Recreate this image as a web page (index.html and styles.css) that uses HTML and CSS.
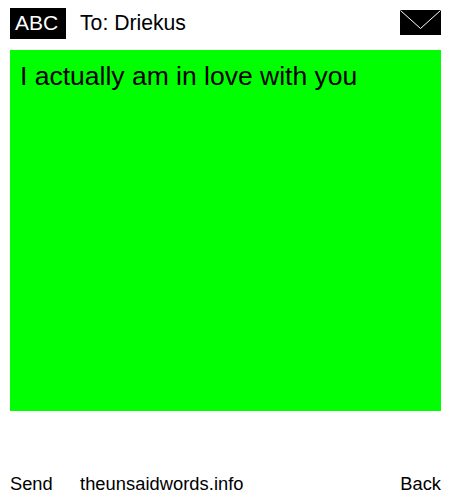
FILE: index.html
```html
<!DOCTYPE html>
<html>
<head>
<meta charset="utf-8">
<title>The Unsaid Words</title>
<link rel="stylesheet" href="styles.css">
</head>
<body>
<div class="page">
  <header class="top">
    <div class="mode">ABC</div>
    <div class="to">To: Driekus</div>
    <svg class="envelope" width="41" height="25" viewBox="0 0 41 25">
      <rect width="41" height="25" fill="#000"/>
      <path d="M0.5 0.5 L20.5 18.5 L40.5 0.5" fill="none" stroke="#fff" stroke-width="1"/>
    </svg>
  </header>
  <main class="message">I actually am in love with you</main>
  <footer class="bottom">
    <span class="send">Send</span>
    <span class="site">theunsaidwords.info</span>
    <span class="back">Back</span>
  </footer>
</div>
</body>
</html>
```
FILE: styles.css
```css
html, body {
  margin: 0;
  padding: 0;
  background: #fff;
}
.page {
  width: 431px;
  height: 500px;
  padding: 0 9px 0 10px;
  display: flex;
  flex-direction: column;
  font-family: "Liberation Sans", Arial, sans-serif;
  color: #000;
}
.top {
  display: flex;
  align-items: flex-start;
  height: 50px;
  padding-top: 8px;
  box-sizing: border-box;
}
.mode {
  width: 56px;
  height: 31px;
  box-sizing: border-box;
  padding-left: 5px;
  background: #000;
  color: #fff;
  font-size: 21px;
  line-height: 29px;
}
.to {
  margin-left: 14px;
  font-size: 21.2px;
  line-height: 30px;
  flex: 1;
}
.envelope {
  display: block;
  margin-top: 2px;
}
.message {
  height: 361px;
  background: #0f0;
  padding: 10px 10px 0;
  box-sizing: border-box;
  font-size: 26.5px;
  line-height: 32px;
}
.bottom {
  display: flex;
  margin-top: 61px;
  font-size: 18.3px;
  line-height: 24px;
}
.send {
  width: 70px;
}
.site {
  flex: 1;
  letter-spacing: 0.05px;
}
```
